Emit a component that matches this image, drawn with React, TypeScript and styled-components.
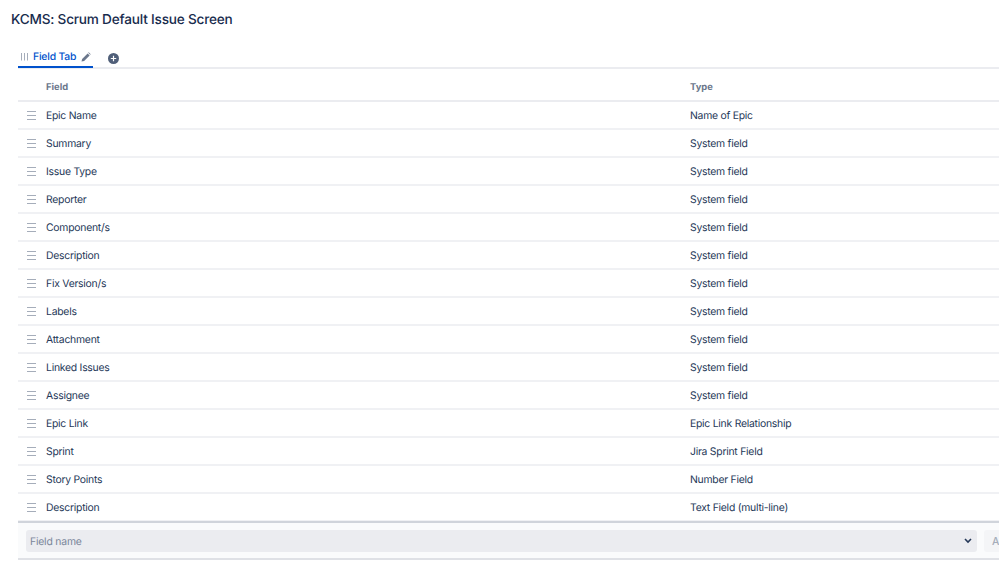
import { createGlobalStyle, styled } from 'styled-components';

const GlobalStyle = createGlobalStyle`
  html, body {
    margin: 0;
    height: 100%;
    background: #fff;
    overflow: hidden;
  }
  body {
    font-family: Inter, "Liberation Sans", sans-serif;
    color: #253858;
    text-rendering: geometricPrecision;
  }
`;

const Page = styled.div`
  width: 999px;
  height: 572px;
  overflow: hidden;
`;

const Title = styled.h1`
  margin: 0;
  padding: 11px 0 0 11px;
  height: 39px;
  box-sizing: border-box;
  font-size: 13.6px;
  line-height: 18px;
  font-weight: 500;
  letter-spacing: -0.2px;
  color: #172b4d;
`;

const Content = styled.div`
  margin-left: 18px;
  width: 1100px;
`;

const TabBar = styled.div`
  display: flex;
  align-items: flex-end;
  box-sizing: border-box;
  height: 30px;
  border-bottom: 2px solid #ebecf0;
`;

const Tab = styled.div`
  display: flex;
  align-items: center;
  gap: 5px;
  box-sizing: border-box;
  width: 75px;
  height: 24px;
  margin-bottom: -1px;
  padding: 3px 0 0 3px;
  border-bottom: 2px solid #0052cc;
  font-size: 10.4px;
  font-weight: 500;
  letter-spacing: -0.2px;
  color: #0052cc;
`;

const AddTab = styled.button`
  display: flex;
  border: 0;
  padding: 0;
  margin: 0 0 3px 15px;
  background: none;
`;

const Row = styled.div<{ $head?: boolean }>`
  display: grid;
  grid-template-columns: 28px 644px 1fr;
  align-items: center;
  box-sizing: border-box;
  height: ${(p) => (p.$head ? 33 : 28)}px;
  padding-top: ${(p) => (p.$head ? 6 : 0)}px;
  border-bottom: 2px solid ${(p) => (p.$head ? '#ebecf0' : '#f0f1f4')};
  font-size: 10.4px;
  letter-spacing: -0.25px;
`;

const HeadCell = styled.div`
  grid-column: ${(p: { $col: number }) => p.$col};
  font-weight: 700;
  font-size: 9.4px;
  letter-spacing: 0;
  color: #6b778c;
`;

const Grip = styled.div`
  width: 9px;
  height: 7px;
  margin-left: 9px;
  border-top: 1px solid #a5adba;
  border-bottom: 1px solid #a5adba;
  position: relative;
  &::after {
    content: '';
    position: absolute;
    left: 0;
    right: 0;
    top: 3px;
    height: 1px;
    background: #a5adba;
  }
`;

const Footer = styled.div`
  display: flex;
  gap: 7px;
  box-sizing: border-box;
  height: 39px;
  margin-top: -1px;
  padding: 7px 0 0 8px;
  border-top: 2px solid #d0d4db;
  border-bottom: 2px solid #dfe1e6;
  background: #fafbfc;
`;

const FieldSelect = styled.div`
  display: flex;
  align-items: center;
  justify-content: space-between;
  box-sizing: border-box;
  width: 951px;
  height: 22px;
  padding: 0 5px 0 4px;
  border-radius: 3px;
  background: #ebecf0;
  font-size: 10.4px;
  letter-spacing: -0.2px;
  color: #7a869a;
`;

const AddButton = styled.button`
  width: 60px;
  height: 22px;
  padding: 0 0 0 8px;
  border: 0;
  border-radius: 3px;
  background: #f4f5f7;
  font: 500 10.4px Inter, "Liberation Sans", sans-serif;
  color: #a5adba;
  text-align: left;
`;

const fields: [string, string][] = [
  ['Epic Name', 'Name of Epic'],
  ['Summary', 'System field'],
  ['Issue Type', 'System field'],
  ['Reporter', 'System field'],
  ['Component/s', 'System field'],
  ['Description', 'System field'],
  ['Fix Version/s', 'System field'],
  ['Labels', 'System field'],
  ['Attachment', 'System field'],
  ['Linked Issues', 'System field'],
  ['Assignee', 'System field'],
  ['Epic Link', 'Epic Link Relationship'],
  ['Sprint', 'Jira Sprint Field'],
  ['Story Points', 'Number Field'],
  ['Description', 'Text Field (multi-line)'],
];

export default function App() {
  return (
    <Page>
      <GlobalStyle />
      <Title>KCMS: Scrum Default Issue Screen</Title>
      <Content>
        <TabBar>
          <Tab>
            <svg width="7" height="9" viewBox="0 0 7 9">
              <path d="M.5 1v7.5M3.5 1v7.5M6.5 1v7.5" stroke="#a5adba" strokeWidth="1" />
            </svg>
            Field Tab
            <svg width="10" height="10" viewBox="0 0 10 10">
              <path d="M0.5 9.5l.6-2.6L6.6 1.4l2 2-5.5 5.5z" fill="#6b778c" />
              <path d="M7.2.8l.6-.5 1.9 1.9-.5.6z" fill="#6b778c" />
            </svg>
          </Tab>
          <AddTab>
            <svg width="11" height="11" viewBox="0 0 11 11">
              <circle cx="5.5" cy="5.5" r="5.5" fill="#505f79" />
              <path d="M5.5 2.8v5.4M2.8 5.5h5.4" stroke="#fff" strokeWidth="1.2" />
            </svg>
          </AddTab>
        </TabBar>
        <Row $head>
          <HeadCell $col={2}>Field</HeadCell>
          <HeadCell $col={3}>Type</HeadCell>
        </Row>
        {fields.map(([name, type], i) => (
          <Row key={i}>
            <Grip />
            <div>{name}</div>
            <div>{type}</div>
          </Row>
        ))}
        <Footer>
          <FieldSelect>
            Field name
            <svg width="8" height="6" viewBox="0 0 8 6">
              <path d="M1 1l3 3 3-3" fill="none" stroke="#253858" strokeWidth="1.6" />
            </svg>
          </FieldSelect>
          <AddButton>Add</AddButton>
        </Footer>
      </Content>
    </Page>
  );
}
